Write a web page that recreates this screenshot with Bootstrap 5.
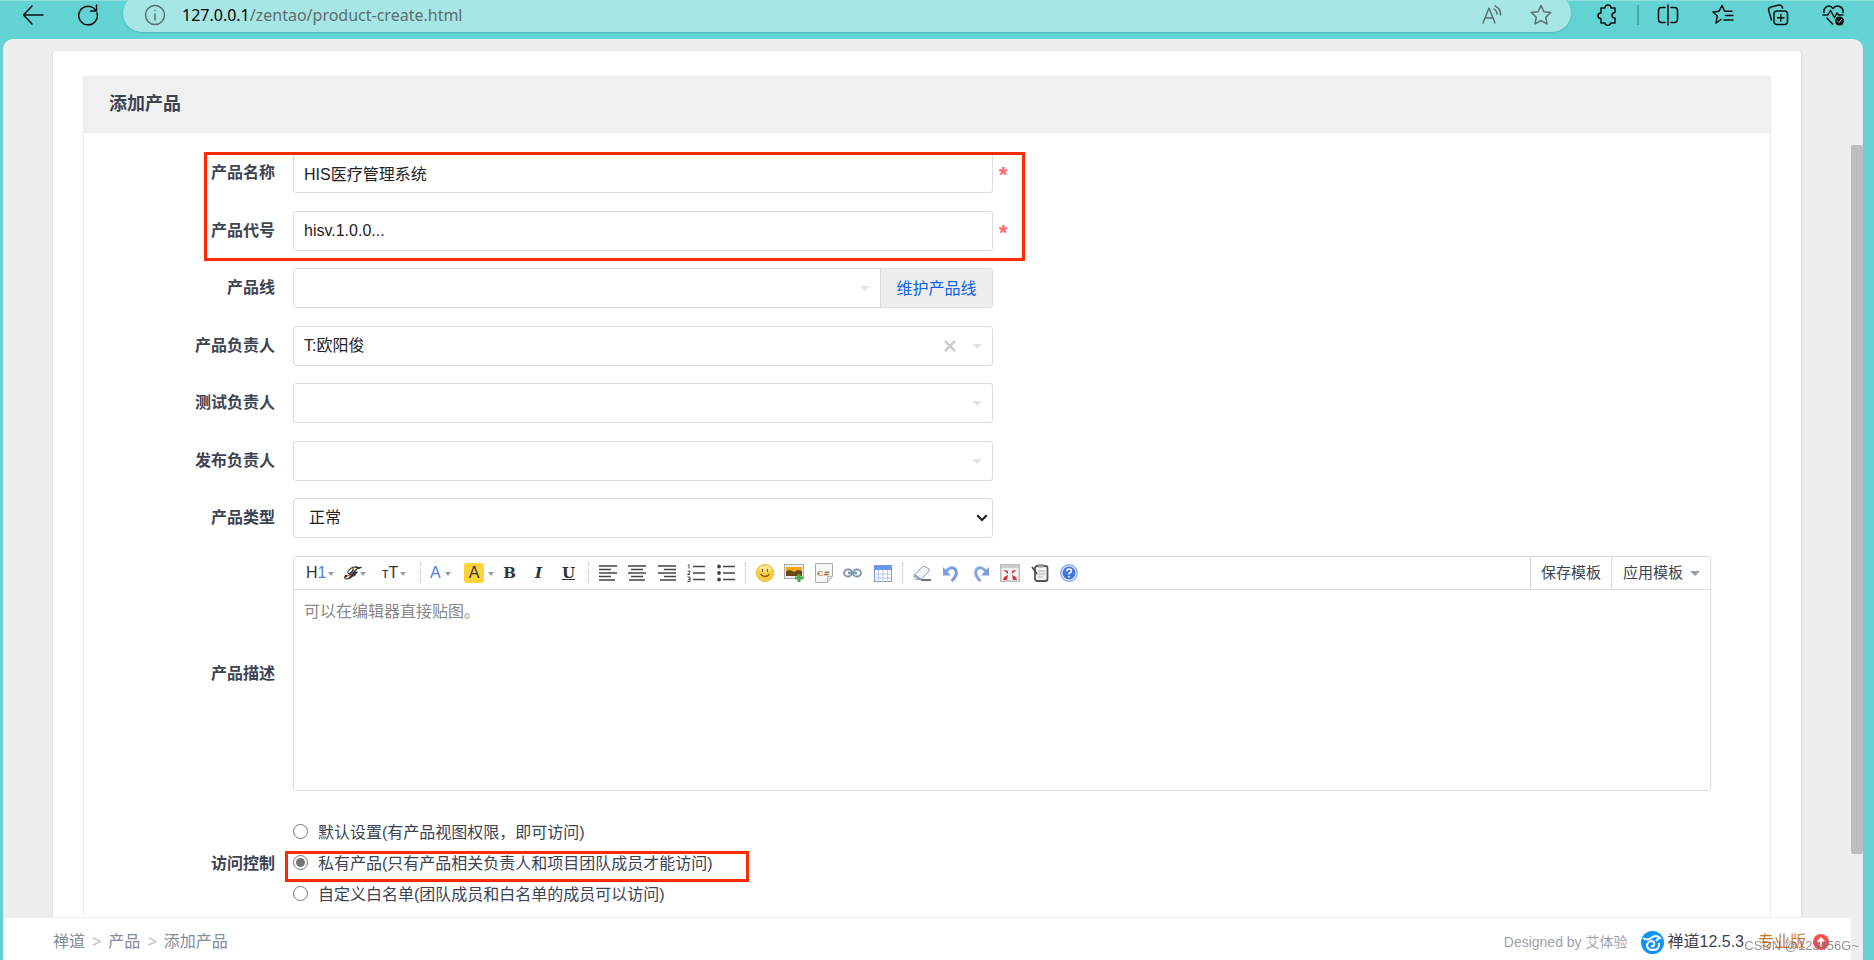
<!DOCTYPE html>
<html lang="zh-CN">
<head>
<meta charset="utf-8">
<meta name="viewport" content="width=device-width, initial-scale=1">
<title>添加产品</title>
<link rel="stylesheet" href="https://cdn.jsdelivr.net/npm/bootstrap@5.3.0/dist/css/bootstrap.min.css">
<style>
:root { --teal: #62d2d2; --ink: #3c4353; --line: #dcdcdc; --red: #ff2a00; }
body { font-family: "Liberation Sans", "Noto Sans CJK SC", sans-serif; font-size: 16px; line-height: 24px; color: var(--ink); background: var(--teal); }
button { font-family: inherit; }
svg { display: block; flex: none; }
.plain { border: 0; background: none; padding: 0; color: inherit; }

/* browser bar */
.browser-bar { height: 39px; padding: 0 29px 10px 22px; border-top: 1px solid #8fe0df; color: #111; }
.browser-bar svg { fill: none; stroke: currentColor; stroke-width: 1.5; stroke-linecap: round; stroke-linejoin: round; }
.reload { margin-left: 33px; }
.address { height: 38px; margin: -5px 0 0 24px; padding: 4px 19px 0 21px; border-radius: 19px; background: #a6e6e4; color: #5c6f70; font-family: "Noto Sans", sans-serif; box-shadow: 0 1px 2px #4cb9b9; }
.address b { font-weight: 400; color: #000; }
.bar-tools { margin-left: 26px; gap: 33px; }
.bar-extend { gap: 18px; }
.bar-rule { width: 2px; height: 20px; background: #4da5a5; }

/* page frame */
.viewport { margin: 0 11px 0 3px; border-radius: 10px 10px 0 0; background: #eee; overflow: hidden; min-height: 0; }
.scroll-track { width: 12px; padding-top: 106px; }
.scroll-thumb { height: 87%; background: #bdbdbd; border-radius: 2px; }
.page-body { min-height: 0; overflow: hidden; padding: 12px 50px 0; }
.sheet { background: #fff; border-radius: 4px; padding: 25px 30px; box-shadow: 0 1px 4px rgba(0,0,0,.1); }
.panel { border: 1px solid #ececec; }
.panel-title { margin: 0; padding: 15px 25px; height: 56px; font-size: 18px; line-height: 24px; font-weight: 700; background: #f0f0f0; border-bottom: 1px solid #ececec; }

/* form */
.form-area { padding: 20px 59px 90px 0; }
.field-row { display: flex; align-items: center; position: relative; margin-bottom: 18px; }
.field-row:nth-child(even) { margin-bottom: 17px; }
.field-label { width: 191px; margin: 0 18px 0 0; text-align: right; font-weight: 700; flex: none; }
.field-box { width: 700px; position: relative; }
.form-control, .form-select { height: 40px; padding: 0 10px; border: 1px solid var(--line); border-radius: 3px; font-size: 16px; line-height: 24px; color: #222; }
.pick { background-image: url("data:image/svg+xml,%3Csvg xmlns='http://www.w3.org/2000/svg' viewBox='0 0 10 5'%3E%3Cpath d='M0 0h10L5 5z' fill='%23e3e3ea'/%3E%3C/svg%3E"); background-size: 10px 5px; background-position: right 10px center; }
.native-pick { padding-left: 15px; background-image: url("data:image/svg+xml,%3Csvg xmlns='http://www.w3.org/2000/svg' viewBox='0 0 12 8'%3E%3Cpath d='M1.2 1.2 6 6l4.800-4.800' fill='none' stroke='%23222' stroke-width='2.200'/%3E%3C/svg%3E"); background-size: 12px 8px; background-position: right 4px center; }
.line-link { width: 113px; flex: none; padding: 2px 0 0; background: #eee; border: 1px solid var(--line); border-radius: 0 3px 3px 0; color: #0c64eb; text-decoration: none; justify-content: center; font-size: 16px; }
.clear-pick { position: absolute; right: 36px; top: 13px; }
.must { margin-left: 6px; padding-top: 4px; font-size: 22px; line-height: 24px; font-weight: 700; color: #ff6565; }
.marked::after { content: ""; position: absolute; border: 3px solid var(--red); pointer-events: none; z-index: 2; }
.mark-fields::after { left: 120px; top: -1px; width: 821px; height: 109px; }
.mark-option::after { left: -8px; top: 3px; width: 464px; height: 31px; }

/* editor */
.editor { border: 1px solid var(--line); border-radius: 3px; min-width: 0; }
.toolbar { height: 33px; padding-left: 7px; border-bottom: 1px solid var(--line); color: #333; }
.tool { width: 29px; height: 30px; display: flex; align-items: center; justify-content: center; }
.tool:nth-child(even) { margin-right: 1px; }
.tool-menu { height: 30px; display: flex; align-items: center; gap: 2px; padding-left: 5px; width: 38px; line-height: 20px; }
.tool-color { width: 35px; gap: 4px; }
.tool-menu::after { content: ""; border: 3px solid transparent; border-top: 4px solid #999; border-bottom: 0; margin-top: 2px; }
.h-num { color: #4a80f0; }
.hilite { background: #ffd23a; border-radius: 3px; width: 20px; height: 20px; }
.script-f { font-family: "DejaVu Serif", serif; font-style: italic; font-weight: 700; font-size: 17px; }
.serif-b { font-family: "DejaVu Serif", serif; font-weight: 700; font-size: 15px; line-height: 18px; }
.tool-rule { border-left: 1px dotted #bbb; height: 20px; margin: 0 4px 0 5px; }
.template-btn { height: 32px; padding: 0 10px; border-left: 1px solid #d5d9e0; font-size: 15px; color: var(--ink); }
.template-menu { display: flex; align-items: center; gap: 7px; padding-left: 11px; }
.template-menu::after { content: ""; border: 5px solid transparent; border-top-color: #9a9eaa; border-bottom: 0; }
.editor-text { display: block; width: 100%; height: 200px; border: 0; border-radius: 3px; padding: 10px; resize: none; outline: 0; }
.editor-text::placeholder { color: #888; opacity: 1; }

/* access */
.access-row { padding-top: 9px; }
.option { display: flex; height: 31px; align-items: center; position: relative; }
.option input { width: 15px; height: 15px; margin: 0 10px 3px 0; accent-color: #757575; }

/* footer */
.page-foot { height: 43px; flex: none; padding: 6px 16px 0 50px; background: #fff; border-top: 1px solid #eee; }
.page-foot a { color: #838a9d; text-decoration: none; }
.breadcrumb { margin: 0; gap: 7px; color: #838a9d; }
.breadcrumb i { font-style: normal; color: #bbb; }
.credit { font-size: 14px; color: #9da0ab; margin-right: 14px; }
.page-foot .brand { color: var(--ink); margin: 0 14px 0 3px; }
.page-foot .edition { color: #c87830; margin-right: 7px; }
.foot-end { margin-right: 6px; }
.watermark { position: fixed; right: 15px; bottom: 2px; font-size: 13px; color: rgba(110,110,110,.75); z-index: 3; }
</style>
</head>
<body class="vh-100 d-flex flex-column overflow-hidden">

<header class="browser-bar d-flex align-items-center flex-shrink-0">
  <button class="plain" aria-label="后退"><svg width="22" height="22" viewBox="0 0 22 22"><path d="M21 11H2M10 2 1.500 11l8.500 9"/></svg></button>
  <button class="plain reload" aria-label="刷新"><svg width="22" height="22" viewBox="0 0 22 22"><path d="M20 9A9.300 9.300 0 1 1 16.500 4l2 2M19.500 1v6h-6"/></svg></button>
  <div class="address d-flex align-items-center flex-grow-1">
    <svg width="22" height="22" viewBox="0 0 22 22"><circle cx="11" cy="11" r="9.500"/><path d="M11 10v6M11 6.500v.2"/></svg>
    <span class="ms-3 flex-grow-1"><b>127.0.0.1</b>/zentao/product-create.html</span>
    <svg class="me-4" width="20" height="20" viewBox="0 0 20 20"><path d="M1 18 7 3l6 15M3 13h8M12 4q3 2 3 5M13 1q6 2.500 5.500 9"/></svg>
    <svg class="ms-1" width="22" height="22" viewBox="0 0 22 22"><path d="m11 1.500 2.900 6.200 6.800.8-5 4.700 1.300 6.700-6-3.300-6 3.300 1.300-6.700-5-4.700 6.800-.8z"/></svg>
  </div>
  <div class="bar-tools d-flex align-items-center">
    <div class="bar-extend d-flex align-items-center">
      <svg width="22" height="22" viewBox="0 0 22 22"><path d="M4 4h4c0-4 6-4 6 0h4v4.500c-4 0-4 5.500 0 5.500v5h-4.500c0 3-5.500 3-5.500 0H4v-4.500c-4 0-4-5.500 0-5.500z"/></svg>
      <span class="bar-rule"></span>
      <svg width="22" height="22" viewBox="0 0 22 22"><path d="M11 1v20M8 3.500H4.500a3 3 0 0 0-3 3v9a3 3 0 0 0 3 3H8M14 3.500h3.500a3 3 0 0 1 3 3v9a3 3 0 0 1-3 3H14"/></svg>
    </div>
    <svg width="22" height="22" viewBox="0 0 22 22"><path d="M9 15.500 4 19l1.300-7L1 8l6-.8L10 1.500l2.600 5.700H20M13.500 11.500H21M12 16h9"/></svg>
    <svg width="22" height="22" viewBox="0 0 22 22"><rect x="7" y="7" width="13.500" height="13.500" rx="3"/><path d="M13.800 10.500v6.500M10.500 13.800H17M4.500 16 1.700 6.500A3 3 0 0 1 4 3l8-2q3 0 3.600 3"/></svg>
    <svg width="23" height="22" viewBox="0 0 23 22"><path d="M2 8.500C1 3 7.500-.5 11 4.500 14.500-.5 22 3 21 8.500M1 11h5l2.500-4.500 4 7L15 9l1.500 2H21M5 14l5.500 6"/><circle cx="17.500" cy="17" r="4.500" fill="currentColor" stroke="none"/><path d="m15.500 17 1.500 1.500 2.500-3" stroke="#62d2d2" stroke-width="1"/></svg>
  </div>
</header>

<div class="viewport d-flex flex-grow-1">
  <div class="d-flex flex-column flex-grow-1">
    <main class="page-body flex-grow-1">
      <div class="sheet">
        <section class="panel">
          <h1 class="panel-title">添加产品</h1>
          <form class="form-area">
            <div class="field-row marked mark-fields">
              <label class="field-label" for="name">产品名称</label>
              <div class="field-box"><input class="form-control" id="name" value="HIS医疗管理系统"></div>
              <span class="must">*</span>
            </div>
            <div class="field-row">
              <label class="field-label" for="code">产品代号</label>
              <div class="field-box"><input class="form-control" id="code" value="hisv.1.0.0..."></div>
              <span class="must">*</span>
            </div>
            <div class="field-row">
              <label class="field-label" for="line">产品线</label>
              <div class="field-box input-group flex-nowrap">
                <select class="form-select pick" id="line"><option></option></select>
                <a class="line-link d-flex align-items-center" href="#">维护产品线</a>
              </div>
            </div>
            <div class="field-row">
              <label class="field-label" for="po">产品负责人</label>
              <div class="field-box">
                <select class="form-select pick" id="po"><option>T:欧阳俊</option></select>
                <button type="button" class="plain clear-pick" aria-label="清除"><svg width="14" height="14" viewBox="0 0 14 14"><path d="m2 2 10 10m0-10L2 12" stroke="#ccc" stroke-width="2.500"/></svg></button>
              </div>
            </div>
            <div class="field-row">
              <label class="field-label" for="qd">测试负责人</label>
              <div class="field-box"><select class="form-select pick" id="qd"><option></option></select></div>
            </div>
            <div class="field-row">
              <label class="field-label" for="rd">发布负责人</label>
              <div class="field-box"><select class="form-select pick" id="rd"><option></option></select></div>
            </div>
            <div class="field-row">
              <label class="field-label" for="type">产品类型</label>
              <div class="field-box"><select class="form-select native-pick" id="type"><option>正常</option></select></div>
            </div>
            <div class="field-row">
              <label class="field-label" for="desc">产品描述</label>
              <div class="editor flex-grow-1">
                <div class="toolbar d-flex align-items-center">
                  <div class="d-flex">
                    <button type="button" class="plain tool-menu"><span>H<span class="h-num">1</span></span></button>
                    <button type="button" class="plain tool-menu"><span class="script-f">ℱ</span></button>
                    <button type="button" class="plain tool-menu"><span><small>т</small>T</span></button>
                  </div>
                  <span class="tool-rule"></span>
                  <div class="d-flex">
                    <button type="button" class="plain tool-menu tool-color"><span class="h-num">A</span></button>
                    <button type="button" class="plain tool-menu tool-color ps-1"><span class="hilite">A</span></button>
                    <button type="button" class="plain tool serif-b">B</button>
                    <button type="button" class="plain tool serif-b fst-italic">I</button>
                    <button type="button" class="plain tool serif-b text-decoration-underline">U</button>
                  </div>
                  <span class="tool-rule"></span>
                  <div class="d-flex">
                    <button type="button" class="plain tool" aria-label="左对齐"><svg width="18" height="16" viewBox="0 0 18 16" stroke="#444" stroke-width="1.500"><path d="M0 1h18M0 4.500h12M0 8h18M0 11.500h12M0 15h16"/></svg></button>
                    <button type="button" class="plain tool" aria-label="居中"><svg width="18" height="16" viewBox="0 0 18 16" stroke="#444" stroke-width="1.500"><path d="M0 1h18M3 4.500h12M0 8h18M3 11.500h12M1 15h16"/></svg></button>
                    <button type="button" class="plain tool" aria-label="右对齐"><svg width="18" height="16" viewBox="0 0 18 16" stroke="#444" stroke-width="1.500"><path d="M0 1h18M6 4.500h12M0 8h18M6 11.500h12M2 15h16"/></svg></button>
                    <button type="button" class="plain tool" aria-label="编号"><svg width="18" height="18" viewBox="0 0 18 18" fill="none" stroke="#444"><path d="M6 2.500h12M6 9h12M6 15.500h12" stroke-width="1.500"/><path d="M1 1.500 2 .5v4M.5 7h2.500v1.500L.5 10.500H3M.5 13H3v4.500H.5M1 15.200h2"/></svg></button>
                    <button type="button" class="plain tool" aria-label="列表"><svg width="18" height="18" viewBox="0 0 18 18" stroke="#444" stroke-width="1.500" fill="#444"><path d="M6 2.500h12M6 9h12M6 15.500h12"/><g stroke="none"><circle cx="2" cy="2.500" r="1.900"/><circle cx="2" cy="9" r="1.900"/><circle cx="2" cy="15.500" r="1.900"/></g></svg></button>
                  </div>
                  <span class="tool-rule"></span>
                  <div class="d-flex">
                    <button type="button" class="plain tool" aria-label="表情"><svg width="18" height="18" viewBox="0 0 18 18"><circle cx="9" cy="9" r="8.500" fill="#fbcf45" stroke="#e9b23a"/><ellipse cx="9" cy="5" rx="6" ry="3.500" fill="#fee98e"/><path d="M6.500 5v3M11.500 5v3M4.500 10q4.500 5 9 0" fill="none" stroke="#8a5a10" stroke-width="1.300"/></svg></button>
                    <button type="button" class="plain tool" aria-label="图片"><svg width="20" height="18" viewBox="0 0 20 18"><rect x=".5" y=".5" width="19" height="14" fill="#eee" stroke="#aaa"/><path d="M2 3h16v9H2z" fill="#f0a818"/><path d="M2 7 6 6l4 2 4-2 4 1v5H2z" fill="#6b4612"/><path d="M15 10v8M11 14h8" stroke="#48ad48" stroke-width="3"/></svg></button>
                    <button type="button" class="plain tool" aria-label="代码"><svg width="18" height="20" viewBox="0 0 18 20"><path d="M.5.500h17v13l-5 6H.5z" fill="#f6f6f6" stroke="#aaa"/><path d="M17 13.500h-4.500v5.500" fill="#ddd" stroke="#bbb"/><text x="2" y="13" font-family="DejaVu Serif" font-weight="700" font-size="8" fill="#b07d3c">C#</text></svg></button>
                    <button type="button" class="plain tool" aria-label="链接"><svg width="19" height="10" viewBox="0 0 19 10" fill="none" stroke="#8195ad" stroke-width="1.800"><rect x="1" y="1.500" width="8" height="7" rx="3.500"/><rect x="10" y="1.500" width="8" height="7" rx="3.500"/><path d="M5 5h9" stroke-width="2.500"/></svg></button>
                    <button type="button" class="plain tool" aria-label="表格"><svg width="18" height="17" viewBox="0 0 18 17"><rect x=".5" y=".5" width="17" height="16" fill="#fff" stroke="#7993c8"/><path d="M0 0h18v5H0z" fill="#6c96ec"/><path d="M0 9h18M0 13h18M4.500 5v12M9 5v12M13.500 5v12" stroke="#b7c7e6"/></svg></button>
                  </div>
                  <span class="tool-rule"></span>
                  <div class="d-flex">
                    <button type="button" class="plain tool" aria-label="清除格式"><svg width="18" height="16" viewBox="0 0 18 16"><path d="m1.500 10 8-8.500q1-1 2.500 0l4 2.500q1 1 0 2L8 14.500H3Q0 12.500 1.500 10z" fill="#f2f5fa" stroke="#8699b5"/><path d="m1.500 10 6 4.500" stroke="#8699b5" stroke-width="2"/><path d="M8 15h10" stroke="#444" stroke-width="1.500"/></svg></button>
                    <button type="button" class="plain tool" aria-label="撤销"><svg width="16" height="17" viewBox="0 0 16 17"><path d="M3 6.500q5-6 9-2.500 4 5-3.500 12" fill="none" stroke="#799de2" stroke-width="3"/><path d="M0 2v8.500h8z" fill="#799de2"/></svg></button>
                    <button type="button" class="plain tool" aria-label="重做"><svg width="16" height="17" viewBox="0 0 16 17"><path d="M13 6.500q-5-6-9-2.500-4 5 3.500 12" fill="none" stroke="#84a8e4" stroke-width="3"/><path d="M16 2v8.500H8z" fill="#799de2"/></svg></button>
                    <button type="button" class="plain tool" aria-label="全屏"><svg width="20" height="18" viewBox="0 0 20 18"><rect x=".8" y=".8" width="18.400" height="16.400" fill="#f5f5f5" stroke="#bbb" stroke-width="1.500"/><path d="M1 1h18v3H1z" fill="#ccc"/><path d="M3 5.500 8 7v3zM17 5.500 12 7v3zM3 16l1-3 4-2-1 5zM17 16l-1-3-4-2 1 5z" fill="#c9383c"/></svg></button>
                    <button type="button" class="plain tool" aria-label="模板"><svg width="18" height="18" viewBox="0 0 18 18"><rect x="4" y="2" width="12.500" height="15" rx="2" fill="#f3f3f3" stroke="#555" stroke-width="1.800"/><path d="M7 0h6v3.500H7z" fill="#999"/><path d="M7 7h7M7 10h7M7 13h5" stroke="#aaa"/><path d="m1 3 5 7" stroke="#555" stroke-width="2"/></svg></button>
                    <button type="button" class="plain tool" aria-label="帮助"><svg width="18" height="18" viewBox="0 0 18 18"><circle cx="9" cy="9" r="8.300" fill="#dfe9fb" stroke="#7ba0e4" stroke-width="1.200"/><circle cx="9" cy="9" r="6.500" fill="#4377dc"/><path d="M6.800 7.300q0-2.300 2.300-2.300t2.300 2Q11.400 8.400 9 9.300v1.200M9 12v1.600" fill="none" stroke="#fff" stroke-width="1.500"/></svg></button>
                  </div>
                  <div class="d-flex ms-auto">
                    <button type="button" class="plain template-btn">保存模板</button>
                    <button type="button" class="plain template-btn template-menu">应用模板</button>
                  </div>
                </div>
                <textarea class="editor-text" id="desc" placeholder="可以在编辑器直接贴图。"></textarea>
              </div>
            </div>
            <div class="field-row access-row">
              <span class="field-label" id="acl">访问控制</span>
              <div role="radiogroup" aria-labelledby="acl">
                <label class="option"><input type="radio" name="acl">默认设置(有产品视图权限，即可访问)</label>
                <label class="option marked mark-option"><input type="radio" name="acl" checked>私有产品(只有产品相关负责人和项目团队成员才能访问)</label>
                <label class="option"><input type="radio" name="acl">自定义白名单(团队成员和白名单的成员可以访问)</label>
              </div>
            </div>
          </form>
        </section>
      </div>
    </main>
    <footer class="page-foot d-flex align-items-center justify-content-between">
      <nav class="breadcrumb"><a href="#">禅道</a><i>&gt;</i><a href="#">产品</a><i>&gt;</i><span>添加产品</span></nav>
      <div class="foot-end d-flex align-items-center">
        <span class="credit">Designed by <b class="fw-normal">艾体验</b></span>
        <svg width="23" height="23" viewBox="0 0 23 23"><circle cx="11.500" cy="11.500" r="11.500" fill="#0a93fb"/><path d="M2 7q4 3 8 0 5-4 9 0-3 1-4 3" fill="none" stroke="#fff" stroke-width="2"/><path d="M18 12q1 7-6 7-6 0-6-5 1-4 5-4 3 1 2 4-1 2-3 1" fill="none" stroke="#fff" stroke-width="2"/></svg>
        <a class="brand" href="#">禅道12.5.3</a>
        <a class="edition" href="#">专业版</a>
        <svg width="16" height="16" viewBox="0 0 16 16"><circle cx="8" cy="8" r="8" fill="#f8504f"/><path d="M8 13V5M4.500 8 8 4.500 11.500 8" fill="none" stroke="#fff" stroke-width="2"/></svg>
      </div>
    </footer>
  </div>
  <div class="scroll-track"><div class="scroll-thumb"></div></div>
</div>
<div class="watermark">CSDN @123456G~</div>
<script src="https://cdn.jsdelivr.net/npm/bootstrap@5.3.0/dist/js/bootstrap.bundle.min.js"></script>
</body>
</html>
